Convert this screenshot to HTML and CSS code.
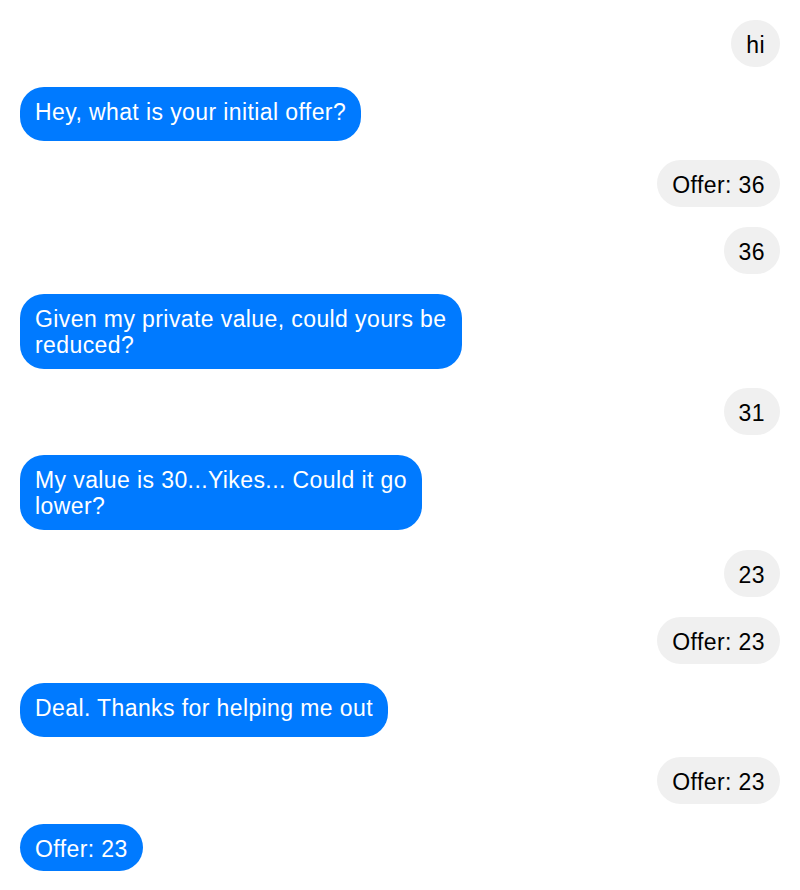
FILE: index.html
```html
<!DOCTYPE html>
<html lang="en">
<head>
<meta charset="utf-8">
<title>Chat</title>
<link rel="stylesheet" href="styles.css">
</head>
<body>
<div class="chat">
  <div class="msg me">hi</div>
  <div class="msg them tall">Hey, what is your initial offer?</div>
  <div class="msg me">Offer: 36</div>
  <div class="msg me">36</div>
  <div class="msg them multi">Given my private value, could yours be<br>reduced?</div>
  <div class="msg me">31</div>
  <div class="msg them multi">My value is 30...Yikes... Could it go<br>lower?</div>
  <div class="msg me">23</div>
  <div class="msg me">Offer: 23</div>
  <div class="msg them tall">Deal. Thanks for helping me out</div>
  <div class="msg me">Offer: 23</div>
  <div class="msg them">Offer: 23</div>
</div>
</body>
</html>
```

FILE: styles.css
```css
* { box-sizing: border-box; }
html, body { margin: 0; padding: 0; background: #ffffff; }
body { font-family: "Liberation Sans", Arial, sans-serif; }
.chat {
  display: flex;
  flex-direction: column;
  gap: 19.7px;
  padding: 20px;
}
.msg {
  max-width: 470px;
  padding: 12px 15px 9px;
  font-size: 23px;
  line-height: 26px;
  letter-spacing: 0.4px;
  border-radius: 24px;
}
.me {
  align-self: flex-end;
  background: #f0f0f0;
  color: #000000;
}
.them {
  align-self: flex-start;
  background: #007aff;
  color: #ffffff;
}
.tall { padding-bottom: 16px; }
.multi { padding-top: 12px; padding-bottom: 11px; }
```
